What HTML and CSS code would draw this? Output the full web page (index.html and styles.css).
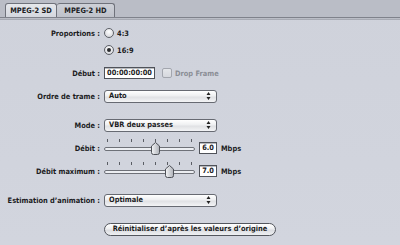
FILE: index.html
```html
<!DOCTYPE html>
<html lang="fr">
<head>
<meta charset="utf-8">
<title>MPEG-2</title>
<link rel="stylesheet" href="styles.css">
</head>
<body>
<div class="window">
  <div class="tabbar">
    <div class="tab tab-sd selected">MPEG-2 SD</div>
    <div class="tab tab-hd">MPEG-2 HD</div>
  </div>
  <div class="rule"></div>
  <div class="panel">
    <div class="row row-prop">
      <span class="label">Proportions :</span>
      <span class="radio"></span><span class="opt">4:3</span>
    </div>
    <div class="row row-169">
      <span class="label"></span>
      <span class="radio on"></span><span class="opt">16:9</span>
    </div>
    <div class="row row-debut">
      <span class="label">Début :</span>
      <span class="field tc">00:00:00:00</span>
      <span class="check"></span><span class="disabled">Drop Frame</span>
    </div>
    <div class="row row-ordre">
      <span class="label">Ordre de trame :</span>
      <span class="popup"><span class="popup-text">Auto</span><svg class="arrows" width="5" height="8" viewBox="0 0 5 8"><path d="M2.5 0 L4.5 3 H0.5 Z M0.5 5 H4.5 L2.5 8 Z" fill="#222"/></svg></span>
    </div>
    <div class="row row-mode">
      <span class="label">Mode :</span>
      <span class="popup"><span class="popup-text">VBR deux passes</span><svg class="arrows" width="5" height="8" viewBox="0 0 5 8"><path d="M2.5 0 L4.5 3 H0.5 Z M0.5 5 H4.5 L2.5 8 Z" fill="#222"/></svg></span>
    </div>
    <div class="row slider-row row-debit">
      <span class="label">Débit :</span>
      <svg class="slider" width="91" height="18" viewBox="0 0 91 18">
        <g stroke="#5a5d64" stroke-width="1">
          <path d="M3.5 0v3M15.5 0v3M27.5 0v3M39.5 0v3M51.5 0v3M63.5 0v3M75.5 0v3M87.5 0v3"/>
        </g>
        <rect x="0.5" y="8.5" width="90" height="3" rx="1.5" fill="#eceef2" stroke="#6e7178"/>
        <path d="M47.5 7 L51.5 3.5 L55.5 7 V13.5 Q55.5 15.5 53.5 15.5 H49.5 Q47.5 15.5 47.5 13.5 Z" fill="url(#th1)" stroke="#4d5057"/>
        <defs><linearGradient id="th1" x1="0" x2="1" y1="0" y2="0"><stop offset="0" stop-color="#f4f5f7"/><stop offset="1" stop-color="#aeb1b8"/></linearGradient></defs>
      </svg>
      <span class="field num">6.0</span>
      <span class="unit">Mbps</span>
    </div>
    <div class="row slider-row row-debitmax">
      <span class="label">Débit maximum :</span>
      <svg class="slider" width="91" height="18" viewBox="0 0 91 18">
        <g stroke="#5a5d64" stroke-width="1">
          <path d="M3.5 0v3M15.5 0v3M27.5 0v3M39.5 0v3M51.5 0v3M63.5 0v3M75.5 0v3M87.5 0v3"/>
        </g>
        <rect x="0.5" y="8.5" width="90" height="3" rx="1.5" fill="#eceef2" stroke="#6e7178"/>
        <path d="M61.5 7 L65.5 3.5 L69.5 7 V13.5 Q69.5 15.5 67.5 15.5 H63.5 Q61.5 15.5 61.5 13.5 Z" fill="url(#th2)" stroke="#4d5057"/>
        <defs><linearGradient id="th2" x1="0" x2="1" y1="0" y2="0"><stop offset="0" stop-color="#f4f5f7"/><stop offset="1" stop-color="#aeb1b8"/></linearGradient></defs>
      </svg>
      <span class="field num">7.0</span>
      <span class="unit">Mbps</span>
    </div>
    <div class="row row-estim">
      <span class="label">Estimation d’animation :</span>
      <span class="popup"><span class="popup-text">Optimale</span><svg class="arrows" width="5" height="8" viewBox="0 0 5 8"><path d="M2.5 0 L4.5 3 H0.5 Z M0.5 5 H4.5 L2.5 8 Z" fill="#222"/></svg></span>
    </div>
    <div class="row row-reset">
      <span class="label"></span>
      <span class="button">Réinitialiser d’après les valeurs d’origine</span>
    </div>
  </div>
</div>
</body>
</html>
```

FILE: styles.css
```css
html, body {
  margin: 0;
  padding: 0;
}
body {
  width: 400px;
  height: 245px;
  overflow: hidden;
  background: #d0d3dc;
  font-family: "DejaVu Sans Condensed", "DejaVu Sans", "Liberation Sans", sans-serif;
  font-weight: bold;
  font-size: 7.4px;
  color: #1c1c1e;
}
.window {
  width: 400px;
  height: 245px;
  background: linear-gradient(#cfd2db, #d2d5de);
}
.tabbar {
  height: 17px;
  background: #babdc6;
  border-bottom: 1px solid #7f828b;
  display: flex;
  align-items: flex-end;
  padding-left: 5px;
  box-sizing: content-box;
}
.tab {
  height: 14px;
  box-sizing: border-box;
  border: 1px solid #6f727b;
  border-bottom: none;
  border-radius: 3px 3px 0 0;
  display: flex;
  align-items: center;
  justify-content: center;
  line-height: 1;
  color: #202124;
  background: linear-gradient(#cdd0d7, #bfc2ca);
}
.tab-sd {
  width: 52px;
}
.tab-hd {
  width: 58px;
  border-left: none;
}
.tab.selected {
  background: linear-gradient(#e6e8ec, #d4d7de);
}
.rule {
  height: 2px;
  background: linear-gradient(#c4c7cf, #9fa2ab);
}
.panel {
  padding-top: 6px;
}
.row {
  display: flex;
  align-items: center;
  height: 14px;
}
.label {
  width: 100px;
  text-align: right;
  margin-right: 4px;
  flex: none;
  white-space: nowrap;
}
.row-169 { margin-top: 3px; }
.row-debut { margin-top: 9px; }
.row-ordre { margin-top: 9px; }
.row-mode { margin-top: 15px; }
.slider-row { height: 18px; }
.row-debit { margin-top: 7px; }
.row-debitmax { margin-top: 5px; }
.row-estim { margin-top: 13px; }
.row-reset { margin-top: 15px; }

.radio {
  width: 10px;
  height: 10px;
  box-sizing: border-box;
  border-radius: 50%;
  border: 1px solid #5d6067;
  background: radial-gradient(circle at 50% 35%, #ffffff, #dcdde1 70%, #c7c9ce);
  display: flex;
  align-items: center;
  justify-content: center;
  flex: none;
}
.radio.on::after {
  content: "";
  width: 4px;
  height: 4px;
  border-radius: 50%;
  background: #2a2b2e;
}
.opt {
  margin-left: 3px;
}
.field {
  height: 12px;
  box-sizing: border-box;
  border: 1px solid #4f5259;
  background: #ffffff;
  box-shadow: inset 0 1px 0 #b9bbbf;
  display: flex;
  align-items: center;
  line-height: 1;
  flex: none;
}
.tc {
  width: 51px;
  justify-content: center;
}
.check {
  width: 10px;
  height: 10px;
  box-sizing: border-box;
  margin-left: 7px;
  border: 1px solid #a3a6ae;
  border-radius: 2px;
  background: linear-gradient(#e4e6ea, #d6d8de);
  flex: none;
}
.disabled {
  color: #8b8e96;
  margin-left: 3px;
}
.popup {
  width: 113px;
  height: 13px;
  box-sizing: border-box;
  border: 1px solid #676a72;
  border-radius: 3px;
  background: linear-gradient(#ffffff, #eeeff1 45%, #e0e1e4 55%, #f3f4f6);
  display: flex;
  align-items: center;
  justify-content: space-between;
  padding: 0 5px 0 4px;
  line-height: 1;
  flex: none;
}
.arrows {
  display: block;
}
.slider {
  display: block;
  flex: none;
}
.num {
  width: 18px;
  margin-left: 4px;
  justify-content: flex-end;
  padding-right: 2px;
}
.unit {
  margin-left: 4px;
}
.button {
  width: 172px;
  height: 13px;
  box-sizing: border-box;
  border: 1px solid #53565d;
  border-radius: 7px;
  background: linear-gradient(#ffffff, #eeeff1 45%, #dcdde1 55%, #eef0f2);
  display: flex;
  align-items: center;
  justify-content: center;
  line-height: 1;
  flex: none;
}
```
